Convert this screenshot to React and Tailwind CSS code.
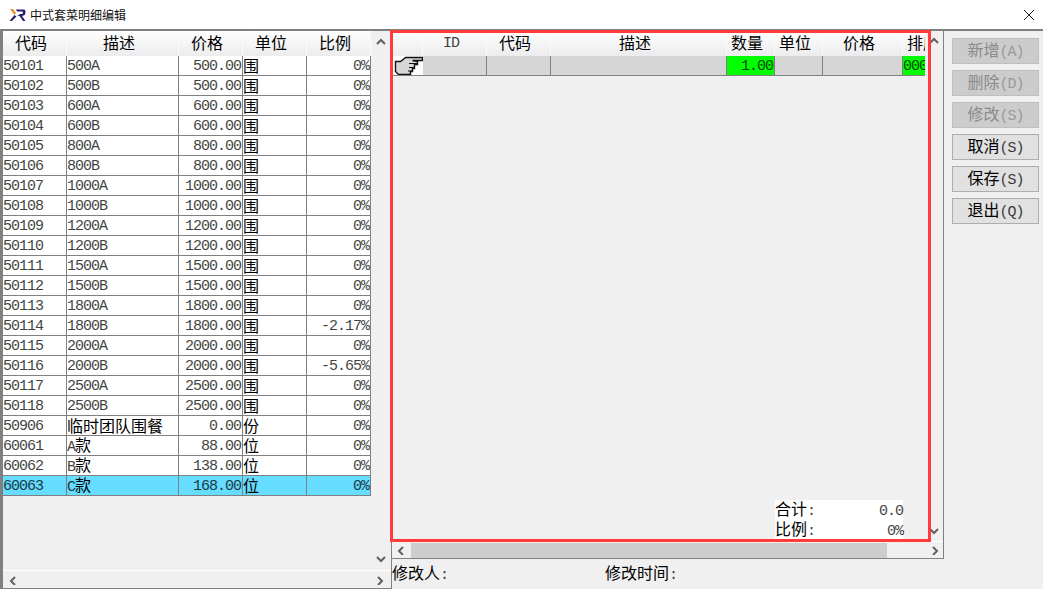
const T = ({ children, className = "" }) => {
  const parts = String(children ?? "").split(/([\u0000-\u00ff]+)/).filter(Boolean);
  return (
    <span className={"whitespace-nowrap leading-[18px] " + className}>
      {parts.map((p, i) =>
        /^[\u0000-\u00ff]+$/.test(p) ? (
          <span key={i} className="font-['Liberation_Mono',monospace] text-[15px] tracking-[-1px] opacity-75">{p}</span>
        ) : (
          <span key={i} className="font-['Noto_Sans_CJK_SC',sans-serif] text-[16px] font-normal">{p}</span>
        )
      )}
    </span>
  );
};

const leftRows = [
  ["50101","500A","500.00","围","0%"],["50102","500B","500.00","围","0%"],["50103","600A","600.00","围","0%"],
  ["50104","600B","600.00","围","0%"],["50105","800A","800.00","围","0%"],["50106","800B","800.00","围","0%"],
  ["50107","1000A","1000.00","围","0%"],["50108","1000B","1000.00","围","0%"],["50109","1200A","1200.00","围","0%"],
  ["50110","1200B","1200.00","围","0%"],["50111","1500A","1500.00","围","0%"],["50112","1500B","1500.00","围","0%"],
  ["50113","1800A","1800.00","围","0%"],["50114","1800B","1800.00","围","-2.17%"],["50115","2000A","2000.00","围","0%"],
  ["50116","2000B","2000.00","围","-5.65%"],["50117","2500A","2500.00","围","0%"],["50118","2500B","2500.00","围","0%"],
  ["50906","临时团队围餐","0.00","份","0%"],["60061","A款","88.00","位","0%"],["60062","B款","138.00","位","0%"],["60063","C款","168.00","位","0%"],
];

const Head = ({ w, children, className = "" }) => (
  <div style={{ width: w }} className={"h-[25px] shrink-0 flex items-center justify-center pr-[7px] pb-[2px] border-r border-[#fafafa] bg-gradient-to-b from-white to-[#ececee] text-black overflow-hidden " + className}>
    <T>{children}</T>
  </div>
);
const Cell = ({ w, children, right, className = "" }) => (
  <div style={{ width: w }} className={"h-full shrink-0 flex items-center overflow-hidden border-r border-[#808080] " + (right ? "justify-end pr-px " : "") + className}>
    <T>{children}</T>
  </div>
);

const Chev = ({ dir }) => {
  const d = { up: "M1 6 L5 2 L9 6", down: "M1 2 L5 6 L9 2", left: "M6 1 L2 5 L6 9", right: "M3 1 L7 5 L3 9" }[dir];
  return (
    <svg width="10" height="10" viewBox="0 0 10 8" className="block">
      <path d={d} fill="none" stroke="#606060" strokeWidth="2" />
    </svg>
  );
};

const Btn = ({ label, k, disabled }) => (
  <div className={"w-[87px] h-[26px] flex items-center justify-center border " + (disabled ? "bg-[#cccccc] border-[#bfbfbf] text-[#8a8a8a]" : "bg-[#e1e1e1] border-[#adadad] text-black")}>
    <T>{label + "(" + k + ")"}</T>
  </div>
);

const Hand = () => (
  <svg width="31" height="19" viewBox="0 0 31 19" className="block bg-white">
    <path d="M3.5 5.5 L8.5 5.5 L13.5 1.5 L30.5 1.5 L30.5 4.5 L20.5 4.5 L25.5 5.5 L25.5 8.5 L22.5 8.5 L22.5 12.5 L20.5 12.5 L20.5 15.5 L18.5 15.5 L18.5 18.5 L6.5 18.5 L3.5 15.5 Z" fill="#d6d6d6" stroke="#111" strokeWidth="1.4" />
    <path d="M17 7.5 L25 7.5 M17 11.5 L22 11.5 M16 15 L20 15" stroke="#111" strokeWidth="1.2" fill="none" />
  </svg>
);

const leftW = [64, 112, 64, 64, 64];
const rightW = [31, 64, 64, 176, 48, 48, 80, 22];

export default function App() {
  return (
    <div className="relative w-[1043px] h-[589px] overflow-hidden bg-[#f0f0f0] text-black flex flex-col">
      <div className="h-[29px] bg-white shrink-0 flex items-center pl-[9px] relative">
        <svg width="17" height="14" viewBox="0 0 17 14" className="mr-[4px]">
          <path d="M1 1 L4 1 L7 5 L5.5 7 Z" fill="#e8912d" />
          <path d="M5.5 7 L7.5 8.5 L3 13 L0.5 13 Z" fill="#2a1f6b" />
          <path d="M7 1.5 L15 1.5 Q16.5 1.5 16.5 4.5 Q16.5 7.5 13 8 L16.5 13 L14 13 L10.5 8 L8.5 8 L11 6 Q14 6 14 4.5 Q14 3.5 13 3.5 L8 3.5 Z" fill="#2a1f6b" />
        </svg>
        <span className="font-['Noto_Sans_CJK_SC',sans-serif] text-[12px] text-[#111]">中式套菜明细编辑</span>
        <svg width="12" height="12" viewBox="0 0 12 12" className="ml-auto mr-[8px]">
          <path d="M1 1 L11 11 M11 1 L1 11" stroke="#222" strokeWidth="1" />
        </svg>
      </div>
      <div className="flex-1 flex min-h-0 border-t-2 border-[#808080]">
        {/* left grid */}
        <div className="w-[392px] shrink-0 h-[558px] border-l-[3px] border-b border-r border-[#808080] flex flex-col">
          <div className="flex-1 min-h-0 flex">
            <div className="w-[368px] shrink-0">
              <div className="flex h-[25px]">
                {["代码","描述","价格","单位","比例"].map((h, i) => <Head key={h} w={leftW[i]}>{h}</Head>)}
              </div>
              {leftRows.map((r, i) => {
                const sel = i === leftRows.length - 1;
                return (
                  <div key={r[0]} className={"flex h-[20px] border-b border-[#808080] " + (sel ? "bg-[#66dcff]" : "bg-white")}>
                    <Cell w={leftW[0]}>{r[0]}</Cell>
                    <Cell w={leftW[1]}>{r[1]}</Cell>
                    <Cell w={leftW[2]} right>{r[2]}</Cell>
                    <Cell w={leftW[3]}>{r[3]}</Cell>
                    <Cell w={leftW[4]} right>{r[4]}</Cell>
                  </div>
                );
              })}
            </div>
            <div className="flex-1 flex flex-col items-center justify-between py-[6px]">
              <Chev dir="up" /><Chev dir="down" />
            </div>
          </div>
          <div className="h-[18px] shrink-0 border-t border-white flex items-center justify-between px-[6px]">
            <Chev dir="left" /><Chev dir="right" />
          </div>
        </div>
        {/* centre */}
        <div className="w-[552px] shrink-0 flex flex-col">
          <div className="h-[528px] shrink-0 border-r border-b border-[#808080] flex flex-col">
            <div className="flex-1 min-h-0 flex">
              <div className="w-[533px] shrink-0 flex flex-col">
                <div className="flex h-[25px] overflow-hidden">
                  <Head w={rightW[0]} />
                  <Head w={rightW[1]}>ID</Head>
                  <Head w={rightW[2]}>代码</Head>
                  <Head w={rightW[3]}>描述</Head>
                  <Head w={rightW[4]}>数量</Head>
                  <Head w={rightW[5]}>单位</Head>
                  <Head w={rightW[6]}>价格</Head>
                  <Head w={rightW[7]} className="justify-start pl-[4px] pr-0 border-r-0">排序</Head>
                </div>
                <div className="flex h-[20px] border-b border-[#808080] bg-[#d6d6d6]">
                  <div className="w-[31px] shrink-0"><Hand /></div>
                  <Cell w={rightW[1]} />
                  <Cell w={rightW[2]} />
                  <Cell w={rightW[3]} />
                  <Cell w={rightW[4]} right className="bg-[#00ff00]">1.00</Cell>
                  <Cell w={rightW[5]} />
                  <Cell w={rightW[6]} />
                  <Cell w={rightW[7]} className="bg-[#00ff00] border-r-0">000</Cell>
                </div>
                <div className="flex-1 flex items-end justify-end pr-[22px] pb-[1px]">
                  <div className="w-[128px] bg-white">
                    <div className="flex justify-between h-[20px] items-center"><T>合计:</T><T>0.0</T></div>
                    <div className="flex justify-between h-[20px] items-center"><T>比例:</T><T>0%</T></div>
                  </div>
                </div>
              </div>
              <div className="flex-1 flex flex-col items-center justify-between py-[5px]">
                <Chev dir="up" /><Chev dir="down" />
              </div>
            </div>
            <div className="h-[17px] shrink-0 border-t border-white flex items-center">
              <div className="w-[19px] flex justify-center shrink-0 pl-[1px]"><Chev dir="left" /></div>
              <div className="w-[476px] h-[15px] bg-[#cdcdcd] shrink-0" />
              <div className="ml-auto w-[17px] flex justify-center"><Chev dir="right" /></div>
            </div>
          </div>
          <div className="flex-1 flex items-center">
            <T className="w-[213px]">修改人:</T>
            <T>修改时间:</T>
          </div>
        </div>
        {/* buttons */}
        <div className="flex-1 flex flex-col gap-[6px] pt-[7px] pl-[8px]">
          <Btn label="新增" k="A" disabled />
          <Btn label="删除" k="D" disabled />
          <Btn label="修改" k="S" disabled />
          <Btn label="取消" k="S" />
          <Btn label="保存" k="S" />
          <Btn label="退出" k="Q" />
        </div>
      </div>
      {/* red annotation frame lying over the screenshot */}
      <div className="absolute left-[390px] top-[30px] w-[541px] h-[512px] border-[3px] border-[#ff3b3b] pointer-events-none" />
    </div>
  );
}
